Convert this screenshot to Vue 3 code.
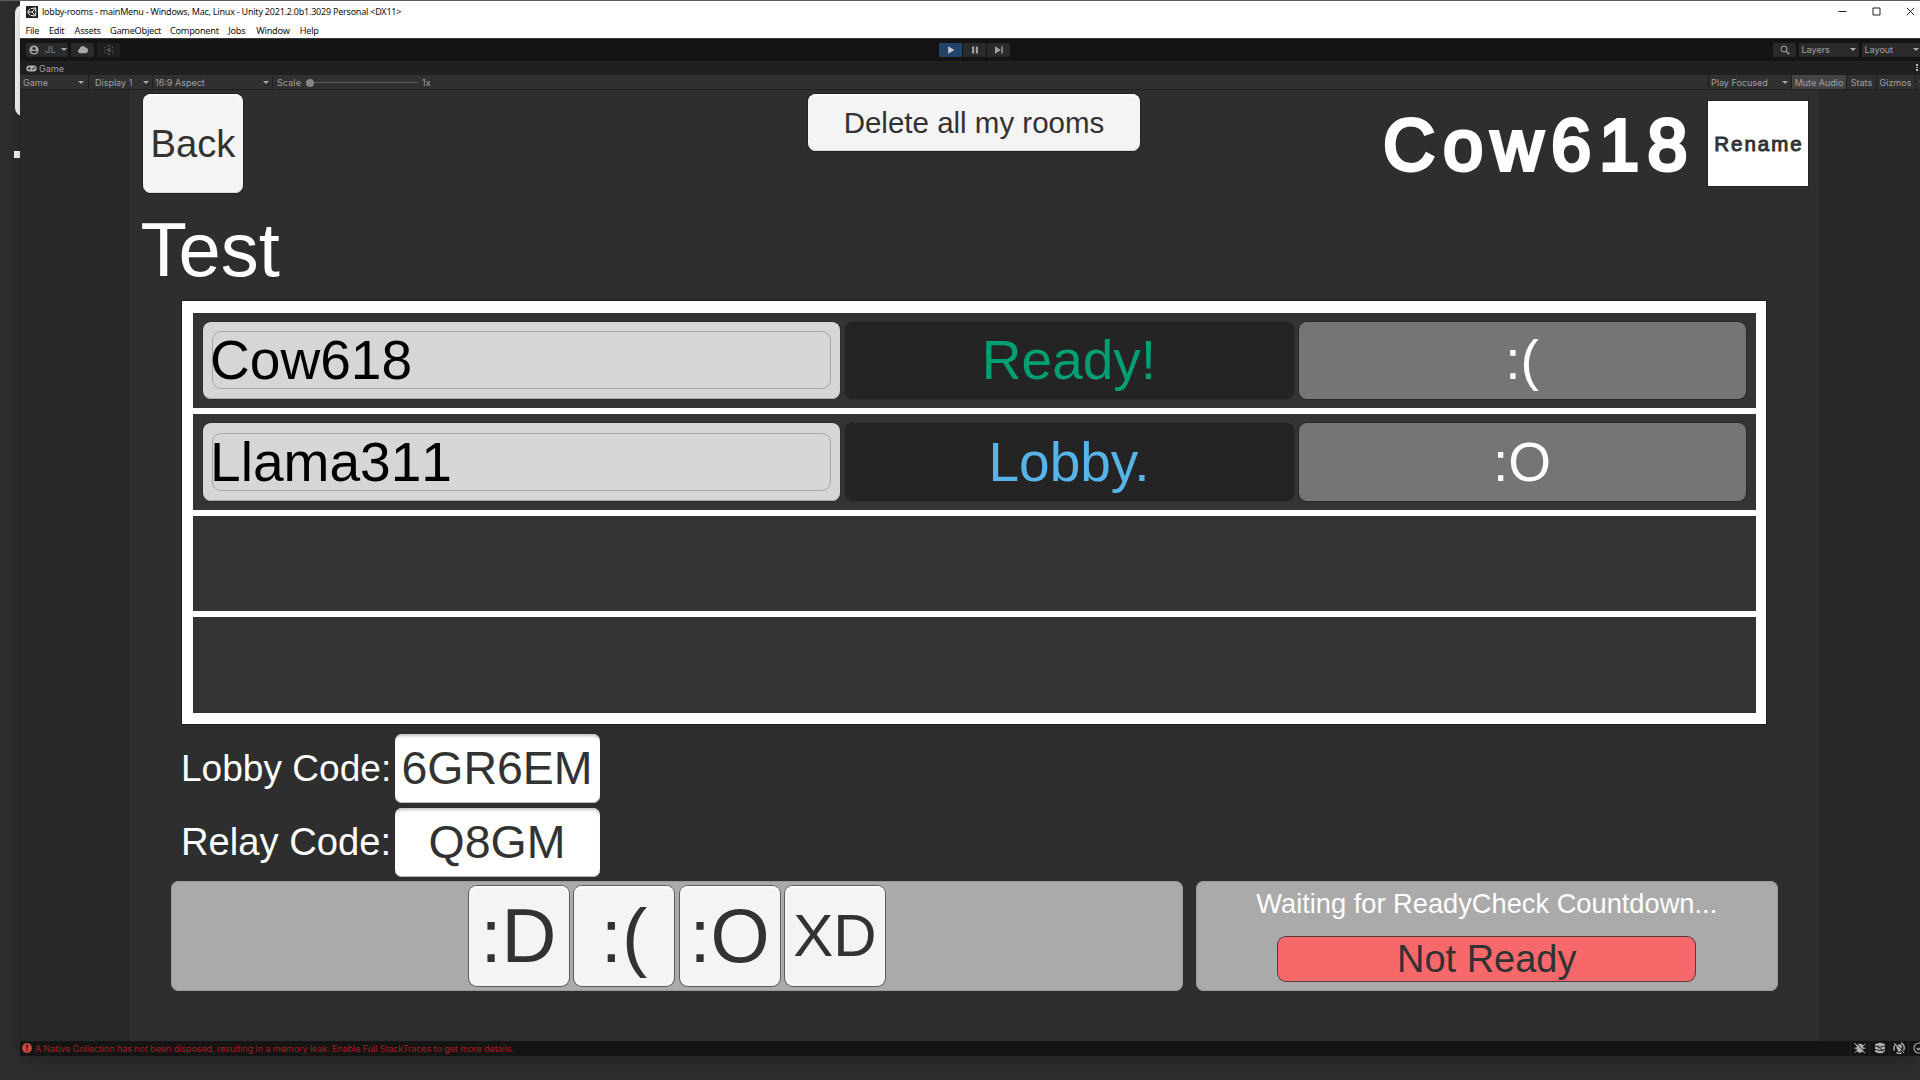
<script setup>
const menus = [
  { label: 'File', w: 23.6 }, { label: 'Edit', w: 25.6 }, { label: 'Assets', w: 35.4 },
  { label: 'GameObject', w: 60 }, { label: 'Component', w: 58.3 }, { label: 'Jobs', w: 28 },
  { label: 'Window', w: 43.4 }, { label: 'Help', w: 20 }
]
const players = [
  { name: 'Cow618', status: 'Ready!', tone: 'ready', emote: ':(' },
  { name: 'Llama311', status: 'Lobby.', tone: 'lobby', emote: ':O' },
  null,
  null
]
const codes = [
  { label: 'Lobby Code:', value: '6GR6EM', cls: 'lobby-label' },
  { label: 'Relay Code:', value: 'Q8GM', cls: 'relay-label' }
]
const emotes = [':D', ':(', ':O', 'XD']
</script>

<template>
  <div class="desktop">
    <div class="behind-card"></div>
    <div class="behind-dot"></div>
    <div class="window">
      <header class="titlebar">
        <svg class="logo" viewBox="0 0 12 12"><rect width="12" height="12" fill="#222" /><path d="M5 2.6 9.6 1.8 10 6.2M9.8 6.4 9.2 10 4.6 9.4M4 9.2 1.6 6 4.2 2.8M2 6H6.2M6.2 6 9.2 2.2M6.2 6 9 9.6" fill="none" stroke="#eee" stroke-width="1" /></svg>
        <span class="title">lobby-rooms - mainMenu - Windows, Mac, Linux - Unity 2021.2.0b1.3029 Personal &lt;DX11&gt;</span>
        <div class="winbtns">
          <svg viewBox="0 0 9 9"><path d="M.5 4.5H8.5" /></svg>
          <svg viewBox="0 0 9 9"><path d="M1 1H8V8H1Z" /></svg>
          <svg viewBox="0 0 9 9"><path d="M.8.8 8.2 8.2M8.2.8.8 8.2" /></svg>
        </div>
      </header>
      <nav class="menubar">
        <span v-for="m in menus" :key="m.label" :style="{ width: m.w + 'px' }">{{ m.label }}</span>
      </nav>

      <div class="toolbar">
        <div class="tgroup left">
          <div class="tbtn account">
            <svg width="10" height="10" viewBox="0 0 10 10"><circle cx="5" cy="5" r="4.6" fill="#a8a8a8" /><circle cx="5" cy="3.5" r="1.6" fill="#2a2a2a" /><path d="M2 6H8Q7.4 8.3 5 8.3T2 6Z" fill="#2a2a2a" /></svg>
            <span>JL</span><i class="arrow"></i>
          </div>
          <div class="tbtn cloud">
            <svg width="12" height="9" viewBox="0 0 12 9"><path d="M3 8.3A2.4 2.4 0 0 1 2.6 3.7 3.1 3.1 0 0 1 8.3 2.6 2.9 2.9 0 0 1 9 8.3Z" fill="#a8a8a8" /></svg>
          </div>
          <div class="tbtn dim">
            <svg width="10" height="10" viewBox="0 0 10 10"><circle cx="5" cy="5" r="1.4" fill="none" stroke="#6c6c6c" /><path d="M5 0V2M5 8V10M.8 2 2 3M9.2 2 8 3M.8 8 2 7M9.2 8 8 7M.3 5H1.3M8.7 5H9.7" stroke="#6c6c6c" fill="none" /></svg>
          </div>
        </div>
        <div class="tgroup play">
          <div class="tbtn on"><svg width="8" height="8" viewBox="0 0 8 8"><path d="M1.2.3 7.4 4 1.2 7.7Z" fill="#c8c8c8" /></svg></div>
          <div class="tbtn"><svg width="8" height="8" viewBox="0 0 8 8"><path d="M1 .5H3.2V7.5H1ZM4.8.5H7V7.5H4.8Z" fill="#a0a0a0" /></svg></div>
          <div class="tbtn"><svg width="8" height="8" viewBox="0 0 8 8"><path d="M0 .3 6 4 0 7.7ZM6.4.3H7.8V7.7H6.4Z" fill="#a0a0a0" /></svg></div>
        </div>
        <div class="tgroup right">
          <div class="tbtn search"><svg width="10" height="10" viewBox="0 0 10 10"><circle cx="4" cy="4" r="3" fill="none" stroke="#a8a8a8" /><path d="M6.2 6.2 9.2 9.2" stroke="#a8a8a8" stroke-width="1.3" /></svg></div>
          <div class="tbtn drop layers"><span>Layers</span><i class="arrow"></i></div>
          <div class="tbtn drop layout"><span>Layout</span><i class="arrow"></i></div>
        </div>
      </div>

      <div class="tabs">
        <svg width="11" height="7" viewBox="0 0 11 7"><rect x=".3" y=".5" width="10.4" height="6" rx="3" fill="#b0b0b0" /><path d="M1.7 3.5H4.7M3.2 2V5" stroke="#222" stroke-width=".9" /><circle cx="7" cy="4.1" r=".8" fill="#222" /><circle cx="8.8" cy="2.9" r=".8" fill="#222" /></svg>
        <span>Game</span>
        <div class="kebab"><b></b><b></b><b></b></div>
      </div>

      <div class="controls">
        <div class="ctl c-game"><span>Game</span><i class="arrow"></i></div>
        <div class="ctl c-display"><span>Display 1</span><i class="arrow"></i></div>
        <div class="ctl c-aspect"><span>16:9 Aspect</span><i class="arrow"></i></div>
        <div class="ctl c-scale"><span>Scale</span><div class="slider"><b></b></div><span>1x</span></div>
        <div class="ctl c-focus"><span>Play Focused</span><i class="arrow"></i></div>
        <div class="ctl c-mute"><span>Mute Audio</span></div>
        <div class="ctl c-stats"><span>Stats</span></div>
        <div class="ctl c-gizmos"><span>Gizmos</span></div>
        <div class="ctl c-more"><i class="arrow"></i></div>
      </div>

      <main class="viewport">
        <section class="game">
          <div class="top">
            <button class="btn back">Back</button>
            <button class="btn delete">Delete all my rooms</button>
            <div class="identity">
              <span class="me">Cow618</span>
              <button class="rename">Rename</button>
            </div>
          </div>
          <h1 class="room">Test</h1>
          <div class="roster">
            <div v-for="(p, i) in players" :key="i" class="row">
              <template v-if="p">
                <div class="name"><div class="field"><span>{{ p.name }}</span></div></div>
                <div class="status" :class="p.tone">{{ p.status }}</div>
                <div class="emote">{{ p.emote }}</div>
              </template>
            </div>
          </div>
          <div class="codes">
            <div v-for="c in codes" :key="c.label" class="code">
              <label :class="c.cls">{{ c.label }}</label>
              <div class="value">{{ c.value }}</div>
            </div>
          </div>
          <div class="bottom">
            <div class="panel emotes">
              <button v-for="e in emotes" :key="e" class="btn face" :class="{ small: e === 'XD' }">{{ e }}</button>
            </div>
            <div class="panel check">
              <p>Waiting for ReadyCheck Countdown...</p>
              <button class="notready">Not Ready</button>
            </div>
          </div>
        </section>
      </main>

      <footer class="statusbar">
        <svg width="10" height="10" viewBox="0 0 10 10"><circle cx="5" cy="5" r="4.9" fill="#d2453f" /><path d="M4.2 1.8H5.8L5.5 5.7H4.5ZM4.4 6.6H5.6V7.9H4.4Z" fill="#141414" /></svg>
        <span>A Native Collection has not been disposed, resulting in a memory leak. Enable Full StackTraces to get more details.</span>
        <div class="sicons">
          <div><svg viewBox="0 0 12 12"><path d="M3.2 3Q6 .5 8.8 3L9.6 6 8.8 9.5Q6 12 3.2 9.5L2.4 6Z" fill="#b0b0b0" /><path d="M.6 1.6 3 4M11.4 2 9 4M.3 6.2H3M9 6.2H11.7M.8 10.6 3 8.6M11.2 10.6 9 8.6" stroke="#b0b0b0" /><path d="M1.8.8 11.8 10.8" stroke="#141414" stroke-width=".8" /><path d="M.8 1.2 11 11.4" stroke="#b0b0b0" stroke-width=".9" /></svg></div>
          <div><svg viewBox="0 0 12 12"><path d="M1 2.3Q6-.8 11 2.3V9.7Q6 12.8 1 9.7Z" fill="#b0b0b0" /><path d="M1 4Q6 6.4 11 4M1 7.4Q6 9.8 11 7.4M3 3.6 12 11.6" stroke="#141414" stroke-width=".9" fill="none" /></svg></div>
          <div><svg viewBox="0 0 12 12"><path d="M1.6 8.6A5 5 0 0 1 3.4 1.8M8 1A5.2 5.2 0 0 1 10.4 8.6M3.4 10.6Q6 12 8.6 10.8" stroke="#b0b0b0" stroke-width="1.4" fill="none" /><circle cx="6.2" cy="4.9" r="2.7" fill="#b0b0b0" /><path d="M4.8 6.5H7.4V9.6H4.8Z" fill="#b0b0b0" /><path d="M2 .8 11.8 10.6" stroke="#141414" stroke-width=".8" /><path d="M1 1 11.2 11.2" stroke="#b0b0b0" /></svg></div>
          <div><svg viewBox="0 0 12 12"><circle cx="6" cy="6" r="5" fill="none" stroke="#b0b0b0" stroke-width="1.1" /><path d="M3.6 6 5.5 7.8 8.8 4.2" fill="none" stroke="#b0b0b0" stroke-width="1.2" /></svg></div>
        </div>
      </footer>
    </div>
  </div>
</template>

<style>
html, body { margin: 0; background: #2e2e2e; overflow: hidden; }
</style>

<style scoped>
* { box-sizing: border-box; }
button { font: inherit; border: 0; padding: 0; margin: 0; color: inherit; }
svg { display: block; flex: none; }
.desktop {
  position: relative; width: 1920px; height: 1080px; overflow: hidden; background: #2e2e2e;
  border-top: 1px solid #5e5c5e; padding-left: 20px;
  font-family: "Liberation Sans", Arial, sans-serif;
}
.behind-card { position: absolute; left: 15px; top: 4px; width: 20px; height: 111px; border-radius: 8px; background: #fff; }
.behind-dot { position: absolute; left: 13.5px; top: 150px; width: 7px; height: 7px; background: #fff; }
.window {
  position: relative; width: 1900px; height: 1055px; display: flex; flex-direction: column;
  background: #141414; box-shadow: 0 3px 18px rgba(0, 0, 0, .28);
}
.titlebar {
  flex: none; height: 22px; background: #fff; display: flex; align-items: center; padding: 0 5px 0 6px; color: #111;
  font-family: "Noto Sans", "Open Sans", sans-serif;
}
.logo { width: 12px; height: 12px; }
.title { margin-left: 4px; font-size: 9px; letter-spacing: -.225px; line-height: 20px; white-space: nowrap; }
.winbtns { margin-left: auto; display: flex; gap: 25px; padding-bottom: 1px; }
.winbtns svg { width: 9px; height: 9px; fill: none; stroke: #222; stroke-width: 1; }
.menubar {
  flex: none; height: 15px; background: #fff; display: flex; align-items: center; padding-left: 5.4px;
  font: 9.2px/15px "Noto Sans", "Open Sans", sans-serif; color: #111; white-space: nowrap; letter-spacing: -.25px;
}
.menubar span { flex: none; }

.toolbar {
  flex: none; height: 23px; background: #141414; border-top: 1px solid #3a3a3a; display: grid; padding-bottom: 1px;
  grid-template-columns: 919px 71px 1fr; align-items: center;
}
.toolbar, .tabs, .controls, .statusbar { font-family: Inter, Roboto, sans-serif; font-size: 9px; color: #a0a0a0; white-space: nowrap; }
.tgroup { display: flex; }
.left { padding-left: 6px; gap: 3px; }
.play { gap: 1px; }
.right { justify-content: flex-end; gap: 3px; }
.tbtn { height: 14px; width: 23px; background: #2a2a2a; border-radius: 1px; display: flex; align-items: center; justify-content: center; }
.account { width: 42px; justify-content: flex-start; padding-left: 3px; }
.account span { margin-left: 6px; color: #858585; font-size: 9.5px; }
.account .arrow { margin-left: 5px; }
.dim { background: #1f1f1f; }
.on { background: #20446a; }
.search { width: 23px; padding-left: 1px; }
.drop { justify-content: space-between; padding: 0 3px 0 2.5px; }
.layers { width: 60px; }
.layout { width: 58px; padding-right: 1px; }
.arrow { width: 0; height: 0; border: 3px solid transparent; border-top: 3.5px solid #a8a8a8; border-bottom: 0; flex: none; }

.tabs { flex: none; height: 14px; background: #202020; display: flex; align-items: center; padding-left: 6px; }
.tabs span { margin-left: 2px; }
.kebab { margin-left: auto; width: 4px; display: flex; flex-direction: column; gap: 1px; padding-bottom: 1px; }
.kebab b { width: 1.6px; height: 1.6px; background: #bbb; }

.controls { flex: none; height: 15px; background: #303030; border-bottom: 1px solid #1f1f1f; display: flex; align-items: stretch; }
.ctl { display: flex; align-items: center; justify-content: space-between; border-right: 1px solid #1f1f1f; flex: none; padding-top: 1px !important; }
.c-game { width: 69px; padding: 0 4px 0 3px; }
.c-display { width: 64px; padding: 0 3px 0 6px; }
.c-aspect { width: 120px; padding: 0 3px 0 2px; }
.c-aspect span { letter-spacing: 0; }
.c-scale { width: 1436px; padding-left: 4px; justify-content: flex-start; }
.c-scale span { letter-spacing: .1px; }
.slider { width: 112px; height: 1px; margin: 0 4px 0 5px; background: #5c5c5c; position: relative; }
.slider b { position: absolute; left: 0; top: -3.5px; width: 8px; height: 8px; border-radius: 50%; background: #858585; }
.c-focus { width: 83px; padding: 0 3px 0 2px; }
.c-mute { width: 55px; background: #444; justify-content: center; }
.c-stats { width: 30px; justify-content: center; }
.c-gizmos { width: 39px; padding-left: 2.5px; }
.c-more { flex: 1; border: 0; padding-left: 3px; overflow: hidden; }

.viewport { flex: none; height: 951px; background: #282828; padding-left: 110px; }
.game { width: 1689px; height: 951px; background: #2e2e2e; display: flex; flex-direction: column; padding: 4px 11px 0 13px; }
.btn { display: flex; align-items: center; justify-content: center; color: #323232; background: #f4f4f4; border-radius: 8px; white-space: nowrap;
  box-shadow: 0 0 0 1px #222, inset 0 3px 2px -1px #fff, inset 0 -1px 0 #d8d8d8; }
.top { height: 100px; display: flex; align-items: flex-start; }
.back { width: 99.5px; height: 99px; font-size: 38.2px; padding-left: .5px; }
.delete { width: 332px; height: 57px; margin-left: 565.5px; font-size: 29.5px; }
.identity { margin-left: auto; display: flex; align-items: center; padding-top: 7px; }
.me { font-size: 71.5px; line-height: 85px; padding-top: 2px; margin-bottom: -2px; letter-spacing: 8.3px; color: #fff; margin-right: 12px; -webkit-text-stroke: 4px #fff; }
.rename { width: 100.5px; height: 85px; background: #fff; color: #323232; font-size: 20.5px; letter-spacing: 2px; padding: 1px 0 0 2.5px;
  -webkit-text-stroke: 1px #323232; box-shadow: 0 0 0 1px #222; }
.room { margin: 9px 0 0 -2.5px; height: 98px; line-height: 94px; font-size: 76px; font-weight: normal; color: #fff; }
.roster {
  width: 1584px; height: 423px; margin-left: 39px; background: #fff; padding: 11.5px 10.5px 11px 10.5px;
  display: grid; grid-template-rows: repeat(4, 1fr); gap: 6px; box-shadow: 0 0 0 1px #1c1c1c;
}
.row { background: #343434; padding: 9px 9.5px 9px 10px; display: grid; grid-template-columns: 637px 449px 447px; gap: 5px; font-size: 55.1px; }
.row > div { border-radius: 8px; display: flex; align-items: center; justify-content: center; min-width: 0; }
.row > .name { background: #d6d6d6; padding: 9px; box-shadow: 0 0 0 1px #2c2c2c, inset 0 -1px 0 #aaa; }
.field { width: 100%; height: 58px; border: 1px solid #a6a6a6; border-radius: 9px; color: #000; display: flex; align-items: center; font-kerning: none; }
.field span { margin-left: -2.5px; }
.row > .status { background: #242424; box-shadow: 0 0 0 .5px #242424; font-size: 55px; }
.ready { color: #009e73; }
.lobby { color: #56b4e9; }
.row > .emote { background: #757575; color: #fff; box-shadow: 0 0 0 1px #292929; }
.codes { padding: 10px 0 0 38px; display: flex; flex-direction: column; gap: 5.5px; }
.code { display: flex; align-items: center; height: 68.5px; color: #fff; }
.code label { width: 213.5px; white-space: nowrap; }
.lobby-label { font-size: 37.1px; }
.relay-label { font-size: 38.2px; }
.value { width: 205px; height: 68.5px; border-radius: 7px; background: #fff; color: #323232; font-size: 46.5px;
  display: flex; align-items: center; justify-content: center; box-shadow: inset 0 4px 3px -2px #c4c4c4, inset 0 -1px 0 #bbb; }
.bottom { display: flex; gap: 13px; margin: 4px 0 0 28px; }
.panel { height: 110px; background: #aaa; border-radius: 8px; box-shadow: inset 0 0 0 1px #999; flex: none; }
.emotes { width: 1011.5px; display: flex; justify-content: center; align-items: center; gap: 5.5px; }
.face { width: 100px; height: 100px; font-size: 76px; box-shadow: 0 0 0 1px #5c5c5c, inset 0 3px 2px -1px #fff; }
.face.small { font-size: 60px; }
.check { width: 582.5px; display: flex; flex-direction: column; align-items: center; }
.check p { margin: 6px 0 0; height: 33px; line-height: 33px; font-size: 27.25px; color: #fff; white-space: nowrap; }
.notready { margin-top: 17px; width: 417px; height: 44px; border-radius: 8px; background: #f7686b; color: #323232; font-size: 38px; line-height: 44px; box-shadow: 0 0 0 1px #5b3a3b; }

.statusbar { flex: none; height: 15px; background: #141414; display: flex; align-items: center; padding: 0 0 1px 2px; color: #a02020; }
.statusbar span { margin-left: 3px; font-size: 9px; letter-spacing: -.073px; }
.sicons { margin-left: auto; display: flex; height: 15px; margin-right: -8px; }
.sicons div { width: 19.6px; border-left: 1px solid #222; display: flex; align-items: center; justify-content: center; }
.sicons svg { width: 12px; height: 12px; }
</style>
